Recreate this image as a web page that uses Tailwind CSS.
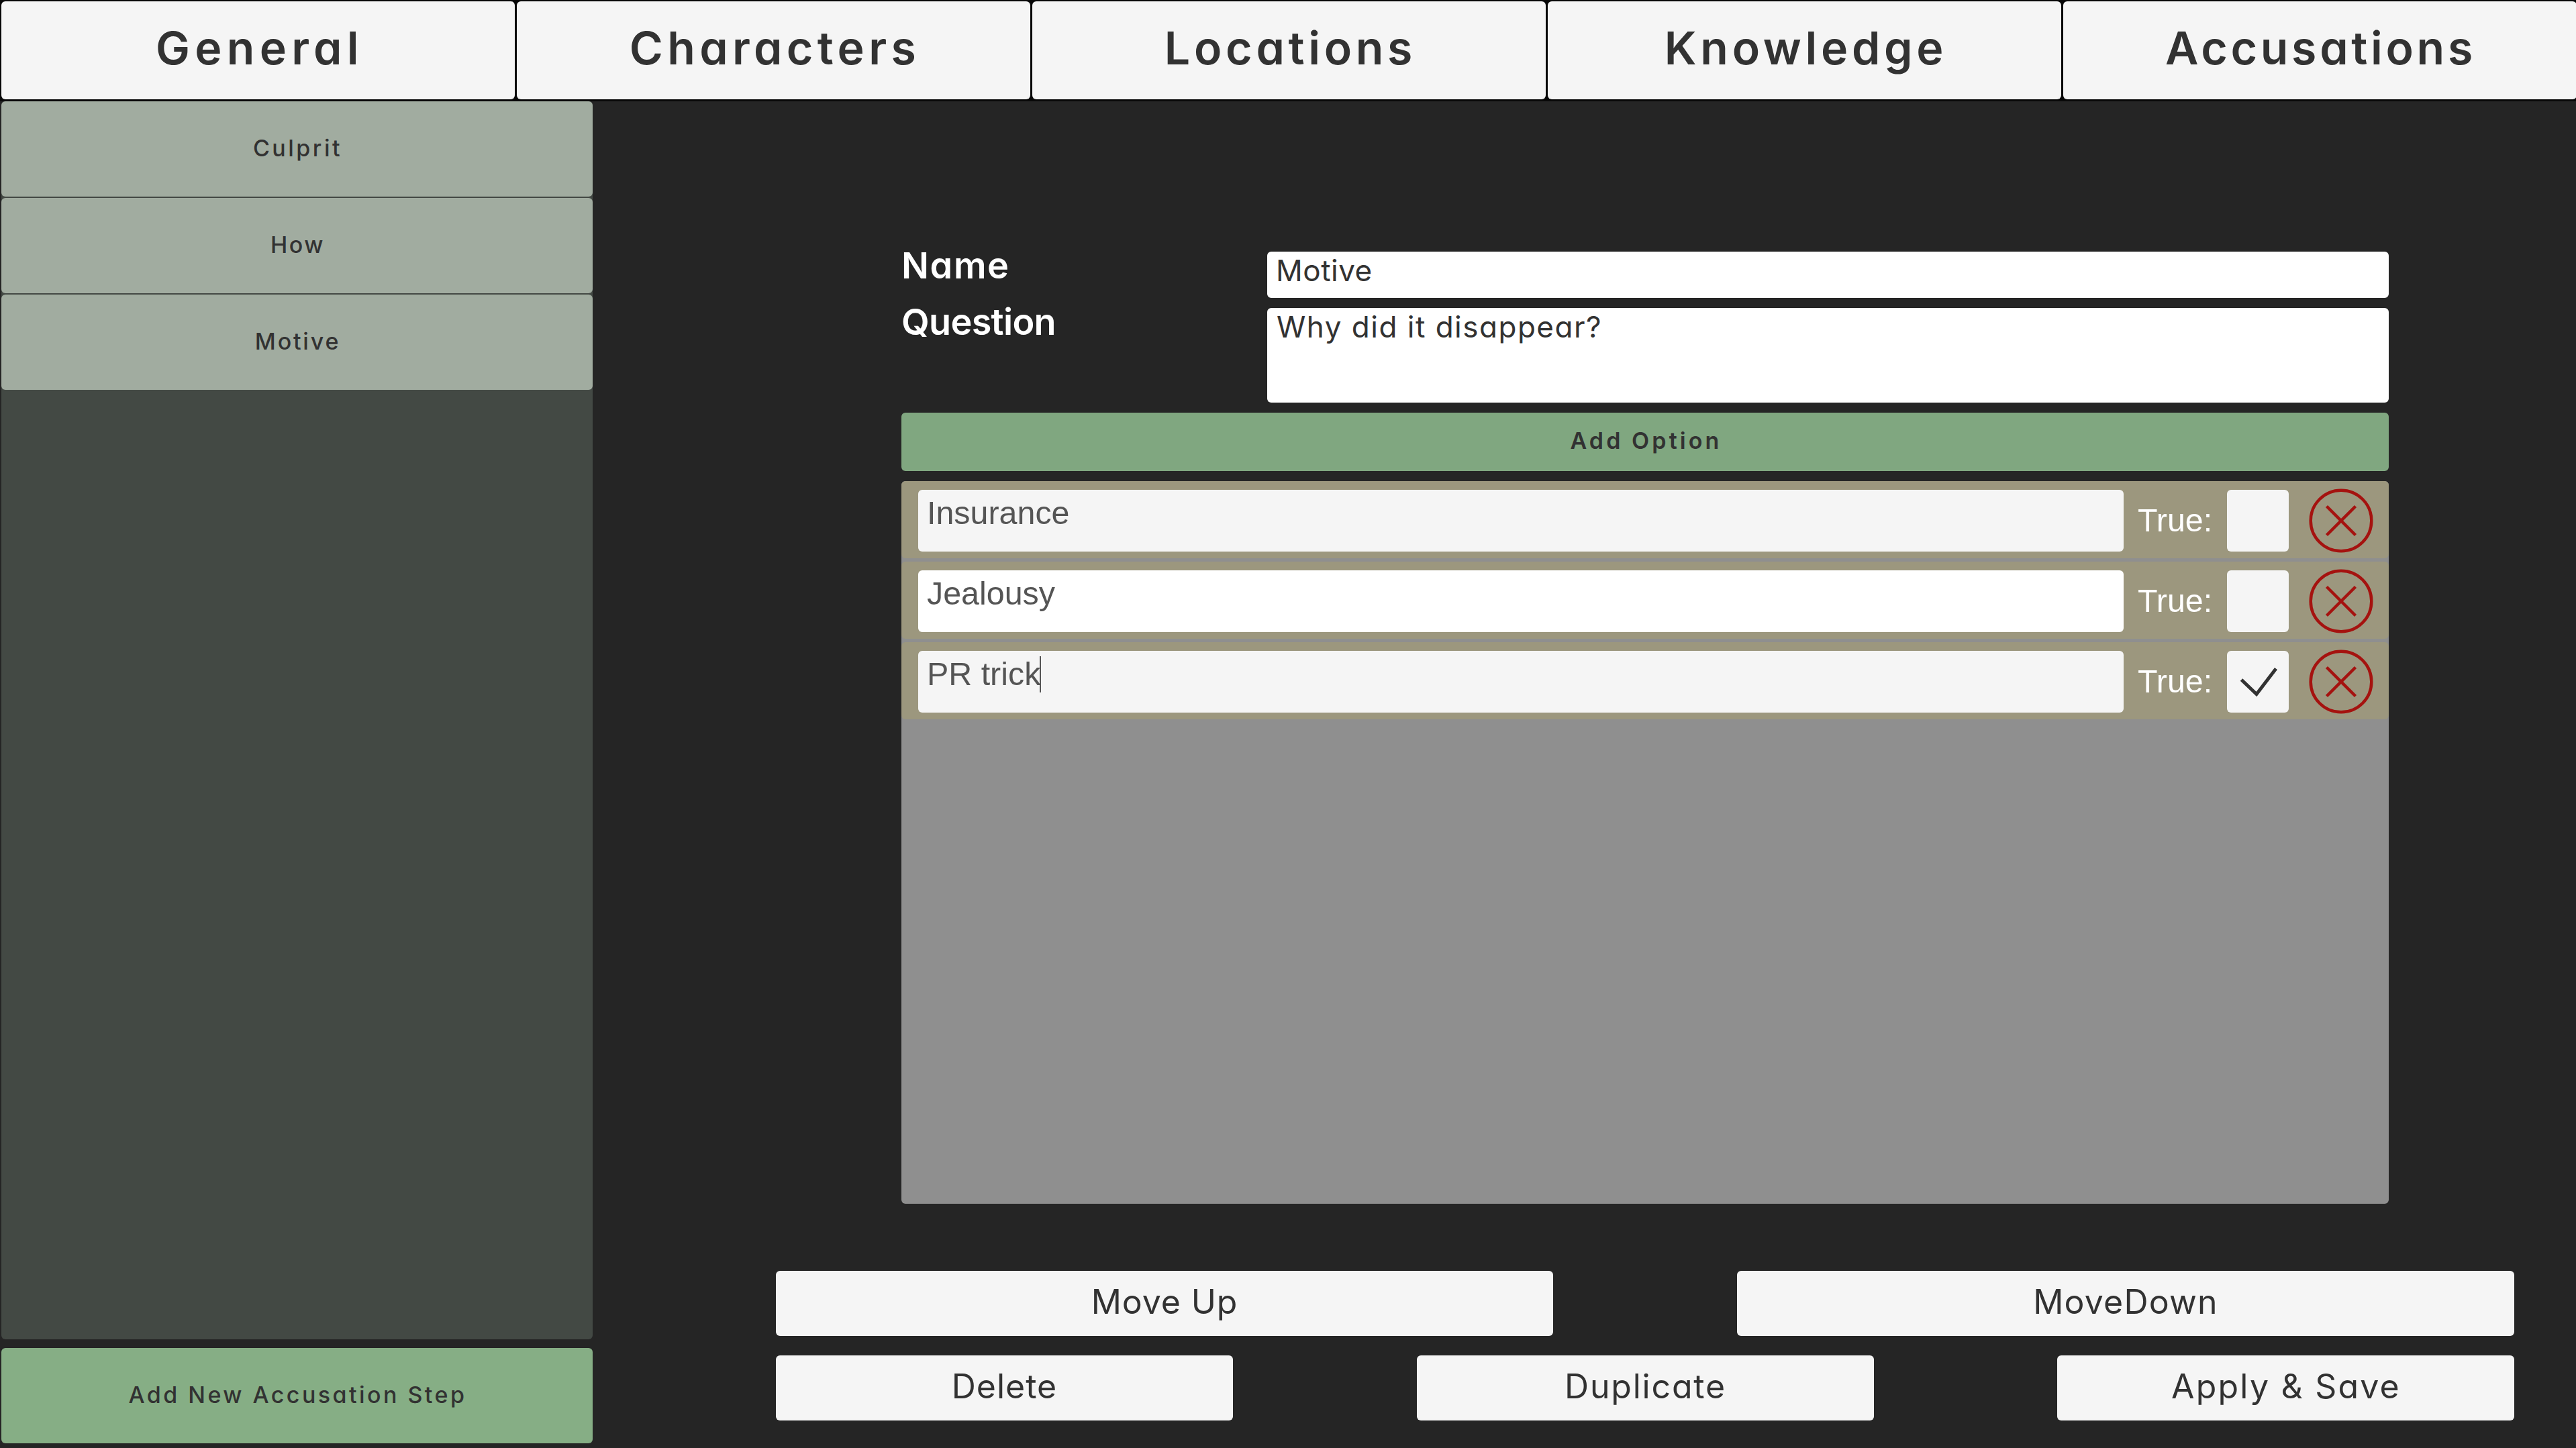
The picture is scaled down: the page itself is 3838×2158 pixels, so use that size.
<!DOCTYPE html>
<html lang="en">
<head>
    <meta charset="UTF-8">
    <meta name="viewport" content="width=device-width, initial-scale=1.0">
    <title>Accusations</title>
    <script src="https://cdn.jsdelivr.net/npm/@tailwindcss/browser@4"></script>
</head>
<body class="w-[3838px] h-[2158px] overflow-hidden bg-[#252525] text-[#323232] font-['Inter',sans-serif] [font-feature-settings:'cv11'] flex flex-col">
    <!-- Tabs -->
    <nav class="h-[151px] shrink-0 bg-[#080808] pt-[2px] pl-[2px] grid grid-cols-[765px_765px_765px_765px_765px] grid-rows-[146px] gap-[3px] text-[68px] font-semibold whitespace-nowrap">
        <button class="bg-[#f5f5f5] rounded-md pb-2 tracking-[7.3px] indent-[5px]">General</button>
        <button class="bg-[#f5f5f5] rounded-md pb-2 tracking-[6.4px] indent-[4px]">Characters</button>
        <button class="bg-[#f5f5f5] rounded-md pb-2 tracking-[5.7px] indent-[4px]">Locations</button>
        <button class="bg-[#f5f5f5] rounded-md pb-2 tracking-[5.7px] indent-[4px]">Knowledge</button>
        <button class="bg-[#f5f5f5] rounded-md pb-2 tracking-[4.7px] indent-[2px]">Accusations</button>
    </nav>

    <div class="flex flex-1 min-h-0">
        <!-- Steps sidebar -->
        <aside class="w-[883px] shrink-0 pl-[2px] flex flex-col gap-[13px] text-[34px] font-medium">
            <div class="h-[1845px] bg-[#434944] rounded-md flex flex-col gap-[2px]">
                <button class="h-[142px] bg-[#a1aca0] rounded-md pb-1 tracking-[3.5px] indent-[2px]">Culprit</button>
                <button class="h-[142px] bg-[#a1aca0] rounded-md pb-1 tracking-[2.5px] indent-[2px]">How</button>
                <button class="h-[142px] bg-[#a1aca0] rounded-md pb-1 tracking-[2.8px] indent-[2px]">Motive</button>
            </div>
            <button class="h-[142px] bg-[#86ae85] rounded-md pb-1 tracking-[3.45px] indent-[2px]">Add New Accusation Step</button>
        </aside>

        <main class="flex-1 pt-[224px]">
            <!-- Step form -->
            <section class="ml-[460px] w-[2216px]">
                <div class="flex h-[69px]">
                    <label class="w-[545px] text-[54px] leading-[41px] font-semibold text-white tracking-[1.6px]">Name</label>
                    <div class="flex-1 bg-white rounded-md pl-[13px] text-[44px] leading-[56px] tracking-[0.5px]">Motive</div>
                </div>
                <div class="flex h-[141px] mt-[15px]">
                    <label class="w-[545px] text-[54px] leading-[41px] font-semibold text-white tracking-[-0.7px]">Question</label>
                    <div class="flex-1 bg-white rounded-md pl-[14px] text-[44px] leading-[56px] tracking-[1.5px]">Why did it disappear?</div>
                </div>
                <button class="block mt-[15px] w-full h-[87px] bg-[#80a780] rounded-md text-[34px] font-semibold pb-1 tracking-[4.1px] indent-[3px]">Add Option</button>

                <!-- Options -->
                <div class="mt-[15px] h-[1077px] bg-[#8f8f8f] rounded-md flex flex-col gap-[5px] font-['Liberation_Sans',sans-serif] text-[48.4px] text-[#555]">
                    <div class="h-[115px] bg-[#9c977e] rounded-md flex items-center pt-[2px] pl-[25px]">
                        <div class="w-[1796px] h-[92px] bg-[#f5f5f5] rounded-md pl-[13px] leading-[69px]">Insurance</div>
                        <span class="ml-[21px] w-[133px] text-white">True:</span>
                        <div class="size-[92px] bg-[#f5f5f5] rounded-md"></div>
                        <svg class="ml-[30px] size-[96px] text-[#a5120f]" viewBox="0 0 96 96" fill="none" stroke="currentColor" stroke-width="4.5"><circle cx="48" cy="48" r="45.3"/><path d="M26.5 26.5l43 43M69.5 26.5l-43 43"/></svg>
                    </div>
                    <div class="h-[115px] bg-[#9c977e] rounded-md flex items-center pt-[2px] pl-[25px]">
                        <div class="w-[1796px] h-[92px] bg-white rounded-md pl-[13px] leading-[69px]">Jealousy</div>
                        <span class="ml-[21px] w-[133px] text-white">True:</span>
                        <div class="size-[92px] bg-[#f5f5f5] rounded-md"></div>
                        <svg class="ml-[30px] size-[96px] text-[#a5120f]" viewBox="0 0 96 96" fill="none" stroke="currentColor" stroke-width="4.5"><circle cx="48" cy="48" r="45.3"/><path d="M26.5 26.5l43 43M69.5 26.5l-43 43"/></svg>
                    </div>
                    <div class="h-[115px] bg-[#9c977e] rounded-md flex items-center pt-[2px] pl-[25px]">
                        <div class="w-[1796px] h-[92px] bg-[#f5f5f5] rounded-md pl-[13px] leading-[69px] flex">PR trick<span class="mt-2 -ml-px w-[2px] h-[54px] bg-[#555]"></span></div>
                        <span class="ml-[21px] w-[133px] text-white">True:</span>
                        <div class="size-[92px] bg-[#f5f5f5] rounded-md">
                            <svg class="size-[92px] text-[#323232]" viewBox="0 0 92 92" fill="none" stroke="currentColor" stroke-width="5"><path d="M21.5 43L44 64.5L73 26.5"/></svg>
                        </div>
                        <svg class="ml-[30px] size-[96px] text-[#a5120f]" viewBox="0 0 96 96" fill="none" stroke="currentColor" stroke-width="4.5"><circle cx="48" cy="48" r="45.3"/><path d="M26.5 26.5l43 43M69.5 26.5l-43 43"/></svg>
                    </div>
                </div>
            </section>

            <!-- Actions -->
            <section class="mt-[100px] ml-[273px] w-[2590px] flex flex-col gap-[29px] text-[50px]">
                <div class="flex justify-between">
                    <button class="w-[1158px] h-[97px] bg-[#f5f5f5] rounded-md pb-1 tracking-[0.9px]">Move Up</button>
                    <button class="w-[1158px] h-[97px] bg-[#f5f5f5] rounded-md pb-1 tracking-[1.2px]">MoveDown</button>
                </div>
                <div class="flex justify-between">
                    <button class="w-[681px] h-[97px] bg-[#f5f5f5] rounded-md pb-1 tracking-[1px]">Delete</button>
                    <button class="w-[681px] h-[97px] bg-[#f5f5f5] rounded-md pb-1 tracking-[1.8px] indent-[1px]">Duplicate</button>
                    <button class="w-[681px] h-[97px] bg-[#f5f5f5] rounded-md pb-1 tracking-[2.2px] indent-[1px]">Apply &amp; Save</button>
                </div>
            </section>
        </main>
    </div>
</body>
</html>
